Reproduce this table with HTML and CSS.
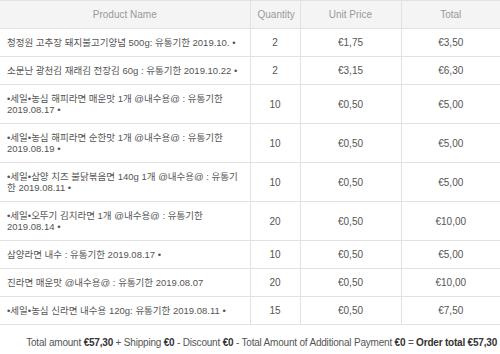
FILE: index.html
```html
<!DOCTYPE html>
<html lang="ko">
<head>
    <meta charset="UTF-8">
    <meta name="viewport" content="width=device-width, initial-scale=1.0">
    <title>Order</title>
    <link rel="stylesheet" href="styles.css">
</head>
<body>
<table class="order-table">
    <tr>
        <th class="col-name">Product Name</th>
        <th class="col-qty">Quantity</th>
        <th class="col-price">Unit Price</th>
        <th class="col-total">Total</th>
    </tr>
    <tr>
        <td class="name">청정원 고추장 돼지불고기양념 500g: 유통기한 2019.10. •</td>
        <td>2</td>
        <td>€1,75</td>
        <td>€3,50</td>
    </tr>
    <tr>
        <td class="name">소문난 광천김 재래김 전장김 60g : 유통기한 2019.10.22 •</td>
        <td>2</td>
        <td>€3,15</td>
        <td>€6,30</td>
    </tr>
    <tr>
        <td class="name">•세일•농심 해피라면 매운맛 1개 @내수용@ : 유통기한 2019.08.17 •</td>
        <td>10</td>
        <td>€0,50</td>
        <td>€5,00</td>
    </tr>
    <tr>
        <td class="name">•세일•농심 해피라면 순한맛 1개 @내수용@ : 유통기한 2019.08.19 •</td>
        <td>10</td>
        <td>€0,50</td>
        <td>€5,00</td>
    </tr>
    <tr>
        <td class="name">•세일•삼양 치즈 불닭볶음면 140g 1개 @내수용@ : 유통기한 2019.08.11 •</td>
        <td>10</td>
        <td>€0,50</td>
        <td>€5,00</td>
    </tr>
    <tr>
        <td class="name">•세일•오뚜기 김치라면 1개 @내수용@ : 유통기한 2019.08.14 •</td>
        <td>20</td>
        <td>€0,50</td>
        <td>€10,00</td>
    </tr>
    <tr>
        <td class="name">삼양라면 내수 : 유통기한 2019.08.17 •</td>
        <td>10</td>
        <td>€0,50</td>
        <td>€5,00</td>
    </tr>
    <tr>
        <td class="name">진라면 매운맛 @내수용@ : 유통기한 2019.08.07</td>
        <td>20</td>
        <td>€0,50</td>
        <td>€10,00</td>
    </tr>
    <tr>
        <td class="name">•세일•농심 신라면 내수용 120g: 유통기한 2019.08.11 •</td>
        <td>15</td>
        <td>€0,50</td>
        <td>€7,50</td>
    </tr>
</table>
<p class="order-summary">
    Total amount <b>€57,30</b> + Shipping <b>€0</b> - Discount <b>€0</b> - Total Amount of Additional Payment <b>€0</b> = <b>Order total €57,30</b>
</p>
</body>
</html>
```

FILE: styles.css
```css
body {
  font-family: "Liberation Sans", "Noto Sans CJK KR", sans-serif;
  font-size: 10px;
  color: #555;
  margin: 0;
  padding: 0;
  background-color: #fff;
  }
.order-table {
  border-collapse: collapse;
  width: 500px;
  table-layout: fixed;
  border-top: 1px solid #e2e2e2;
  border-bottom: 1px solid #e2e2e2;
  }
th, td {
  box-sizing: border-box;
  border: 1px solid #e2e2e2;
  padding: 8px 7px;
  line-height: 11px;
  text-align: center;
  vertical-align: middle;
  font-weight: normal;
  }
.col-name { width: 250px; }
.col-qty { width: 50px; }
.col-price { width: 101px; }
.col-total { width: 99px; }
th:first-child, td:first-child {
  border-left: none;
  }
th:last-child, td:last-child {
  border-right: none;
  }
th {
  background-color: #f4f4f4;
  color: #999;
  }
td.name {
  text-align: left;
  font-size: 9.5px;
  }
.order-summary {
  margin: 12px 3px 0 0;
  text-align: right;
  line-height: 12px;
  letter-spacing: -0.2px;
  }
.order-summary b {
  color: #333;
  }
```
